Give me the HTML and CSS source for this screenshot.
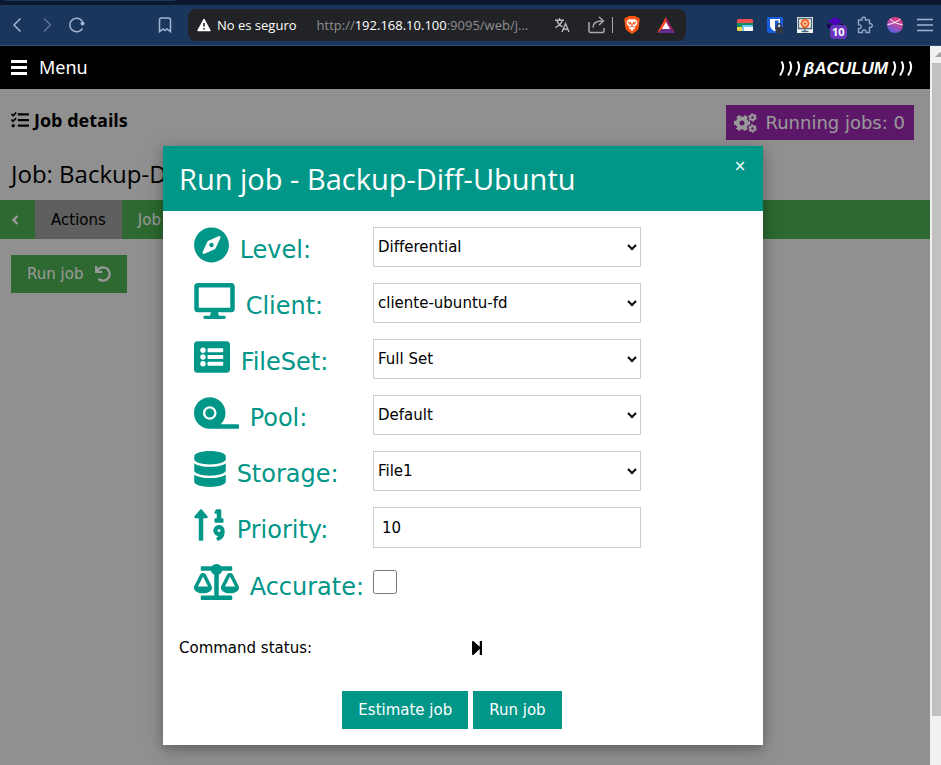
FILE: index.html
```html
<!DOCTYPE html>
<html lang="es">
<head>
<meta charset="utf-8">
<title>Job details</title>
<link rel="stylesheet" href="styles.css">
</head>
<body>
<header class="browser">
  <div class="tabstrip"><div class="tab-edge"></div></div>
  <div class="toolbar">
    <div class="tools-left">
      <button class="tool" aria-label="Atrás"><svg width="20" height="20" viewBox="0 0 20 20"><path d="M13.500 3.500 7 10l6.500 6.500" class="line"/></svg></button>
      <button class="tool dim" aria-label="Adelante"><svg width="20" height="20" viewBox="0 0 20 20"><path d="M7 3.500 13.500 10 7 16.500" class="line"/></svg></button>
      <button class="tool" aria-label="Recargar"><svg width="20" height="20" viewBox="0 0 20 20"><path d="M15.500 13.500A6.800 6.800 0 1 1 15.500 6.500" class="line"/><circle cx="15.500" cy="8.500" r="2" fill="currentColor"/></svg></button>
      <button class="tool bookmark" aria-label="Marcador"><svg width="20" height="20" viewBox="0 0 20 20"><path d="M4.500 16.800V5a2 2 0 0 1 2-2h7a2 2 0 0 1 2 2v11.800L12 14l-2 1.500L8 14z" class="line"/></svg></button>
    </div>
    <div class="address">
      <svg width="14" height="14" viewBox="0 0 14 14"><path d="M7 1.500 13 12.500H1z" fill="#fff" stroke="#fff" stroke-width="1.500" stroke-linejoin="round"/><path d="M7 5v3.500M7 10v1.500" stroke="#222326" stroke-width="1.600"/></svg>
      <span class="insecure">No es seguro</span>
      <span class="url">http://<b>192.168.10.100</b>:9095/web/j...</span>
      <svg class="translate" width="16" height="16" viewBox="0 0 16 16"><path d="M1 3.200h9M5.500 1v2M8.300 3.200C7.500 6.500 4.500 9.200 1.500 10.500M3 3.500c.8 2.800 3 5.200 5.500 6.300M8 15l3.500-8.500L15 15M9.200 12.200h4.600" fill="none" stroke="#b9babd" stroke-width="1.400"/></svg>
      <svg class="share" width="17" height="18" viewBox="0 0 17 18"><path d="M1 6v9a1.500 1.500 0 0 0 1.500 1.500h12A1.500 1.500 0 0 0 16 15v-3M5 11.500c0-4 3-6.500 9-6.500M11 1l4.500 4L11 9" fill="none" stroke="#a8a9ac" stroke-width="1.500"/></svg>
      <span class="divider"></span>
      <svg class="brave" width="16" height="18" viewBox="0 0 16 18"><path d="M4.500 0h7L13 1.500l1.500-.3L16 4l-.7 2L15 10.500c-.3 2-1 3.200-2.500 4.500L8 18l-4.500-3C2 13.700 1.300 12.500 1 10.500L.7 6 0 4l1.500-2.800 1.500.3z" fill="#fb5412"/><path d="m5 3 3 .6L11 3l2.600 2.800-1 3.200-2.100 1.700L11 12 8 15l-3-3 .5-1.300L3.400 9l-1-3.200z" fill="#fff"/><path d="m4 6 2.800.8L6 8.500zM12 6l-2.800.8.8 1.700zM8 6.500v3.800M6 11l2-1 2 1" fill="none" stroke="#fb5412"/></svg>
      <svg width="18" height="16" viewBox="0 0 18 16"><path d="M9 0v6L5.500 12 0 16z" fill="#ff4724"/><path d="m9 0 9 16-5.500-4L9 6z" fill="#9e1f63"/><path d="M0 16l5.500-4h7l5.500 4z" fill="#662d91"/><path d="m9 5 4 7H5z" fill="#fff"/></svg>
    </div>
    <div class="extensions">
      <button class="tool" aria-label="Extensión 1"><svg width="16" height="14" viewBox="0 0 16 14"><rect y="1" width="16" height="12" rx="1.500" fill="#ee4f50"/><path d="M0 5h16v4H0z" fill="#128b63"/><path d="M0 9h9v4H1.500A1.500 1.500 0 0 1 0 11.500z" fill="#f3d24b"/><rect x="5" y="7" width="11" height="6" rx="1" fill="#6ac9f4"/><path d="M7 9h9v3a1 1 0 0 1-1 1H8a1 1 0 0 1-1-1z" fill="#fff"/></svg></button>
      <button class="tool" aria-label="Extensión 2"><svg width="16" height="16" viewBox="0 0 16 16"><rect width="16" height="16" rx="1" fill="#175ddc"/><path d="M3 2h10v6c0 3-2 5-5 6.500C5 13 3 11 3 8z" fill="#fff"/><path d="M8 3.500h3.500V8c0 2-1.500 3.500-3.500 4.500z" fill="#175ddc"/><rect x="8.500" y="10" width="7.500" height="6" rx="1" fill="#343843"/><path d="M10.200 10V8.700a2 2 0 0 1 4 0V10" fill="none" stroke="#343843" stroke-width="1.400"/></svg></button>
      <button class="tool" aria-label="Extensión 3"><svg width="16" height="16" viewBox="0 0 16 16"><path d="M0 0h16v16H0z" fill="#f5f5f3"/><path d="M1.500 1.500h13v10h-13zM8 12v2.500M4.500 14.500h7" fill="none" stroke="#50687d" stroke-width="1.400"/><circle cx="8" cy="6.500" r="4.500" fill="#ee6421"/><circle cx="8" cy="6.500" r="2" fill="none" stroke="#fff"/></svg></button>
      <button class="tool" aria-label="Extensión 4"><svg width="16" height="16" viewBox="0 0 16 16"><path d="m8 0 7 4-7 5-7-5z" fill="#4d00b8"/><path d="m0 6 8 5 8-5v5l-8 4-8-5z" fill="#180052"/></svg><span class="badge">10</span></button>
      <button class="tool" aria-label="Extensiones"><svg width="18" height="18" viewBox="0 0 18 18"><path d="M2.500 4H6c-.6-1.800.4-2.800 1.700-2.800S10 2.200 9.400 4h4.100v3.800c1.800-.6 2.800.4 2.800 1.700s-1 2.300-2.800 1.700v5.300H10c.4-1.800-.7-2.600-1.800-2.600s-2.100.8-1.800 2.600H2.500v-4c1.800.4 2.700-.5 2.700-1.700S4.300 8.300 2.500 8.700z" fill="none" stroke="#92a7c9" stroke-width="1.400" stroke-linejoin="round"/></svg></button>
      <button class="tool" aria-label="Perfil"><svg width="16" height="16" viewBox="0 0 16 16"><defs><linearGradient id="ball" x1=".8" y1="0" x2=".3" y2="1"><stop stop-color="#ec3971"/><stop offset=".5" stop-color="#b54baa"/><stop offset="1" stop-color="#5260e4"/></linearGradient></defs><circle cx="8" cy="8" r="8" fill="url(#ball)"/><path d="M.5 7.500C6 7 10 4.500 13.500 2M3 2c3 2.500 6 5 12.500 5.500" fill="none" stroke="#fff"/></svg></button>
      <button class="tool" aria-label="Menú"><svg width="16" height="14" viewBox="0 0 16 14"><path d="M0 1.500h16M0 7h16M0 12.500h16" class="line"/></svg></button>
    </div>
  </div>
</header>

<div class="viewport">
  <div class="page">
    <nav class="topbar">
      <button class="menu-button"><svg width="16" height="15" viewBox="0 0 16 15"><path d="M0 1.500h16M0 7.500h16M0 13.500h16" stroke="#fff" stroke-width="3"/></svg>Menu</button>
      <div class="brand">
        <svg width="24" height="15" viewBox="0 0 24 15"><path d="M3.500.5Q7.500 6.500 2 14.500M11.500.5Q15.500 6.500 10 14.500M19.500.5Q23.500 6.500 18 14.500"/></svg>
        <span>βACULUM</span>
        <svg width="24" height="15" viewBox="0 0 24 15"><path d="M3.500.5Q7.500 6.500 2 14.500M11.500.5Q15.500 6.500 10 14.500M19.500.5Q23.500 6.500 18 14.500"/></svg>
      </div>
    </nav>

    <main class="content">
      <div class="title-row">
        <h5 class="page-title"><svg width="18" height="18" viewBox="0 0 512 512" fill="currentColor"><path d="M139.610 35.500a12 12 0 0 0-17 0L58.930 98.810l-22.700-22.120a12 12 0 0 0-17 0L3.530 92.410a12 12 0 0 0 0 17l47.590 47.400a12.780 12.780 0 0 0 17.610 0l15.590-15.620L156.520 69a12.090 12.090 0 0 0 .09-17zm0 159.190a12 12 0 0 0-17 0l-63.680 63.720-22.700-22.100a12 12 0 0 0-17 0L3.530 252a12 12 0 0 0 0 17L51 316.500a12.770 12.770 0 0 0 17.600 0l15.700-15.690 72.200-72.220a12 12 0 0 0 .09-16.900zM64 368c-26.490 0-48.590 21.500-48.590 48S37.530 464 64 464a48 48 0 0 0 0-96zm432 16H208a16 16 0 0 0-16 16v32a16 16 0 0 0 16 16h288a16 16 0 0 0 16-16v-32a16 16 0 0 0-16-16zm0-320H208a16 16 0 0 0-16 16v32a16 16 0 0 0 16 16h288a16 16 0 0 0 16-16V80a16 16 0 0 0-16-16zm0 160H208a16 16 0 0 0-16 16v32a16 16 0 0 0 16 16h288a16 16 0 0 0 16-16v-32a16 16 0 0 0-16-16z"/></svg>Job details</h5>
        <a class="running" href="#"><svg width="23" height="20" viewBox="0 0 23 20" fill="none" stroke="currentColor"><circle cx="8" cy="10" r="4.500" stroke-width="4"/><circle cx="8" cy="10" r="7" stroke-width="2.400" stroke-dasharray="4 3.330" stroke-dashoffset="2"/><circle cx="18.500" cy="4.500" r="2.300" stroke-width="2"/><circle cx="18.500" cy="4.500" r="3.500" stroke-width="1.500" stroke-dasharray="2 1.660"/><circle cx="18.500" cy="15.500" r="2.300" stroke-width="2"/><circle cx="18.500" cy="15.500" r="3.500" stroke-width="1.500" stroke-dasharray="2 1.660"/></svg>Running jobs: 0</a>
      </div>
      <h3 class="job-name">Job: Backup-D</h3>
      <div class="tabs">
        <button class="tab back" aria-label="Back"><svg width="8" height="10" viewBox="0 0 8 10"><path d="M6.500 1 2.500 5l4 4" fill="none" stroke="currentColor" stroke-width="2.400"/></svg></button>
        <button class="tab active">Actions</button>
        <button class="tab">Job</button>
      </div>
      <div class="actions">
        <button class="run">Run job <svg width="16" height="16" viewBox="0 0 512 512" fill="currentColor"><path d="M212.333 224.333H12c-6.627 0-12-5.373-12-12V12C0 5.373 5.373 0 12 0h48c6.627 0 12 5.373 12 12v78.112C117.773 39.279 184.260 7.470 258.175 8.007c136.906.994 246.448 111.623 246.157 248.532C504.041 393.258 393.120 504 256.333 504c-64.089 0-122.496-24.313-166.510-64.215-5.099-4.622-5.334-12.554-.467-17.420l33.967-33.967c4.474-4.474 11.662-4.717 16.401-.525C170.760 415.336 211.580 432 256.333 432c97.268 0 176-78.716 176-176 0-97.267-78.716-176-176-176-58.496 0-110.280 28.476-142.274 72.333h98.274c6.627 0 12 5.373 12 12v48c0 6.627-5.373 12-12 12z"/></svg></button>
      </div>
    </main>

    <div class="overlay">
      <section class="modal" role="dialog" aria-labelledby="modal-title">
        <header class="modal-head">
          <h2 id="modal-title">Run job - Backup-Diff-Ubuntu</h2>
          <button class="close" aria-label="Close">×</button>
        </header>
        <form class="modal-body">
          <div class="row">
            <label for="level"><svg width="35" height="36" viewBox="0 0 496 512"><path d="M225.380 233.370c-12.500 12.500-12.500 32.760 0 45.250 12.490 12.500 32.760 12.500 45.250 0 12.500-12.500 12.500-32.760 0-45.250-12.500-12.490-32.760-12.490-45.250 0zM248 8C111.030 8 0 119.030 0 256s111.030 248 248 248 248-111.030 248-248S384.970 8 248 8zm126.140 148.050L308.170 300.400a31.938 31.938 0 0 1-15.770 15.770l-144.340 65.970c-16.650 7.610-33.810-9.550-26.200-26.200l65.980-144.350a31.938 31.938 0 0 1 15.770-15.770l144.340-65.970c16.650-7.600 33.800 9.550 26.190 26.200z"/></svg> Level:</label>
            <select id="level"><option>Differential</option></select>
          </div>
          <div class="row">
            <label for="client"><svg width="41" height="36" viewBox="0 0 576 512"><path d="M528 0H48C21.500 0 0 21.500 0 48v320c0 26.500 21.500 48 48 48h192l-16 48h-72c-13.300 0-24 10.700-24 24s10.700 24 24 24h272c13.300 0 24-10.700 24-24s-10.700-24-24-24h-72l-16-48h192c26.500 0 48-21.500 48-48V48c0-26.500-21.500-48-48-48zm-16 352H64V64h448v288z"/></svg> Client:</label>
            <select id="client"><option>cliente-ubuntu-fd</option></select>
          </div>
          <div class="row">
            <label for="fileset"><svg width="36" height="36" viewBox="0 0 512 512"><path d="M464 480H48c-26.510 0-48-21.490-48-48V80c0-26.510 21.490-48 48-48h416c26.510 0 48 21.490 48 48v352c0 26.510-21.490 48-48 48zM128 120c-22.091 0-40 17.909-40 40s17.909 40 40 40 40-17.909 40-40-17.909-40-40-40zm0 96c-22.091 0-40 17.909-40 40s17.909 40 40 40 40-17.909 40-40-17.909-40-40-40zm0 96c-22.091 0-40 17.909-40 40s17.909 40 40 40 40-17.909 40-40-17.909-40-40-40zm288-136v-32c0-6.627-5.373-12-12-12H204c-6.627 0-12 5.373-12 12v32c0 6.627 5.373 12 12 12h200c6.627 0 12-5.373 12-12zm0 96v-32c0-6.627-5.373-12-12-12H204c-6.627 0-12 5.373-12 12v32c0 6.627 5.373 12 12 12h200c6.627 0 12-5.373 12-12zm0 96v-32c0-6.627-5.373-12-12-12H204c-6.627 0-12 5.373-12 12v32c0 6.627 5.373 12 12 12h200c6.627 0 12-5.373 12-12z"/></svg> FileSet:</label>
            <select id="fileset"><option>Full Set</option></select>
          </div>
          <div class="row">
            <label for="pool"><svg width="45" height="36" viewBox="0 0 640 512"><path d="M224 192c-35.300 0-64 28.700-64 64s28.700 64 64 64 64-28.700 64-64-28.700-64-64-64zm400 224H380.600c41.500-40.700 67.400-97.300 67.400-160 0-123.700-100.300-224-224-224S0 132.300 0 256s100.300 224 224 224h400c8.800 0 16-7.200 16-16v-32c0-8.800-7.200-16-16-16zm-400-64c-53 0-96-43-96-96s43-96 96-96 96 43 96 96-43 96-96 96z"/></svg> Pool:</label>
            <select id="pool"><option>Default</option></select>
          </div>
          <div class="row">
            <label for="storage"><svg width="32" height="36" viewBox="0 0 448 512"><path d="M448 73.143v45.714C448 159.143 347.667 192 224 192S0 159.143 0 118.857V73.143C0 32.857 100.333 0 224 0s224 32.857 224 73.143zM448 176v102.857C448 319.143 347.667 352 224 352S0 319.143 0 278.857V176c48.125 33.143 136.208 48.572 224 48.572S399.874 209.143 448 176zm0 160v102.857C448 479.143 347.667 512 224 512S0 479.143 0 438.857V336c48.125 33.143 136.208 48.572 224 48.572S399.874 369.143 448 336z"/></svg> Storage:</label>
            <select id="storage"><option>File1</option></select>
          </div>
          <div class="row">
            <label for="priority"><svg width="32" height="36" viewBox="0 0 448 512"><path d="M304 96h16v64h-16a16 16 0 0 0-16 16v32a16 16 0 0 0 16 16h96a16 16 0 0 0 16-16v-32a16 16 0 0 0-16-16h-16V48a16 16 0 0 0-16-16h-48a16 16 0 0 0-14.290 8.830l-16 32A16 16 0 0 0 304 96zm26.150 162.910a79 79 0 0 0-55 54.170c-14.250 51.050 21.210 97.770 68.850 102.530a84.070 84.070 0 0 1-20.850 12.910c-7.570 3.400-10.800 12.470-8.180 20.340l9.900 20c2.870 8.630 12.530 13.490 20.900 9.910 58-24.760 86.250-61.610 86.250-132V336c-.02-51.210-48.400-91.340-101.850-77.090zM352 356a20 20 0 1 1 20-20 20 20 0 0 1-20 20zM16 160h48v304a16 16 0 0 0 16 16h32a16 16 0 0 0 16-16V160h48c14.210 0 21.390-17.240 11.310-27.310l-80-96a16 16 0 0 0-22.620 0l-80 96C-5.350 142.740 1.780 160 16 160z"/></svg> Priority:</label>
            <input id="priority" type="text" value="10">
          </div>
          <div class="row">
            <label for="accurate"><svg width="45" height="36" viewBox="0 0 640 512"><path d="M256 336h-.02c0-16.180 1.340-8.730-85.050-181.510-17.650-35.290-68.190-35.360-85.870 0C-2.060 328.750.02 320.330.02 336H0c0 44.180 57.310 80 128 80s128-35.820 128-80zM128 176l72 144H56l72-144zm511.980 160c0-16.180 1.340-8.730-85.050-181.510-17.650-35.290-68.190-35.360-85.870 0-87.120 174.260-85.040 165.840-85.040 181.510H384c0 44.180 57.310 80 128 80s128-35.820 128-80h-.02zM440 320l72-144 72 144H440zm88 128H352V153.250c23.510-10.290 41.160-31.480 46.390-57.250H528c8.840 0 16-7.160 16-16V48c0-8.840-7.160-16-16-16H383.640C369.040 12.680 346.090 0 320 0s-49.040 12.680-63.640 32H112c-8.840 0-16 7.160-16 16v32c0 8.840 7.160 16 16 16h129.610c5.230 25.760 22.870 46.960 46.390 57.250V448H112c-8.840 0-16 7.160-16 16v32c0 8.840 7.160 16 16 16h416c8.840 0 16-7.160 16-16v-32c0-8.840-7.160-16-16-16z"/></svg> Accurate:</label>
            <input id="accurate" type="checkbox">
          </div>
          <div class="status">
            <span>Command status:</span>
            <svg width="14" height="16" viewBox="0 0 448 512"><path d="M384 44v424c0 6.600-5.400 12-12 12h-48c-6.600 0-12-5.400-12-12V291.600l-195.500 181C95.900 489.700 64 475.400 64 448V64c0-27.400 31.900-41.700 52.500-24.600L312 219.300V44c0-6.600 5.400-12 12-12h48c6.600 0 12 5.400 12 12z"/></svg>
          </div>
          <div class="buttons">
            <button type="button">Estimate job</button>
            <button type="button">Run job</button>
          </div>
        </form>
      </section>
    </div>
  </div>
  <div class="scrollbar" aria-hidden="true">
    <svg width="11" height="17" viewBox="0 0 11 17"><path d="M5 11l5-5 5 5z" fill="#a3a3a3"/></svg>
    <div class="thumb"></div>
  </div>
</div>
</body>
</html>
```
FILE: styles.css
```css
* { box-sizing: border-box; }

body {
  margin: 0;
  height: 100vh;
  display: flex;
  flex-direction: column;
  overflow: hidden;
  font: 15px/22px "DejaVu Sans", sans-serif;
  color: #000;
}

button {
  border: 0;
  margin: 0;
  padding: 0;
  background: none;
  color: inherit;
  font: inherit;
}

svg { flex: none; }

/* Browser toolbar */
.browser { flex: none; }
.tabstrip { height: 5px; background: #0b1830; }
.tab-edge { width: 170px; height: 1px; margin-left: 5px; background: #1b365d; }
.toolbar {
  display: flex;
  align-items: center;
  height: 41px;
  background: #1b365d;
  border-bottom: 1px solid #3a5171;
  color: #a2b5d3;
}
.tools-left { display: flex; width: 188px; padding: 0 8px 0 2px; }
.tool {
  display: flex;
  align-items: center;
  justify-content: center;
  position: relative;
  width: 30px;
  height: 30px;
}
.tool.dim { color: #5a7194; }
.bookmark { margin-left: auto; }
.line { fill: none; stroke: currentColor; stroke-width: 1.5; }
.address {
  flex: 1;
  min-width: 0;
  display: flex;
  align-items: center;
  height: 32px;
  padding: 0 11px 0 9px;
  border-radius: 8px;
  background: #222326;
  color: #fff;
  font: 13px/18px "Open Sans", sans-serif;
  white-space: nowrap;
}
.insecure { margin-left: 6px; }
.url { flex: 1; margin-left: 20px; color: #8d8e91; }
.url b { color: #fff; font-weight: 400; }
.translate { margin-right: 18px; }
.share { margin-right: 7px; }
.divider { width: 1px; height: 16px; background: #aaa; }
.brave { margin: 0 17px 0 11px; }
.extensions { display: flex; margin: 0 1px 0 44px; }
.badge {
  position: absolute;
  left: 10px;
  top: 15px;
  padding: 0 2px;
  border-radius: 4px;
  background: #6a36bd;
  color: #fff;
  font: bold 11px/14px "Open Sans", sans-serif;
}

/* Page */
.viewport { flex: 1; min-height: 0; display: flex; }
.page {
  flex: 1;
  min-width: 0;
  position: relative;
  background: #f1f1f1;
}
.topbar {
  position: relative;
  z-index: 2;
  display: flex;
  align-items: center;
  justify-content: space-between;
  height: 43px;
  padding: 0 16px 0 11px;
  background: #000;
  color: #fff;
}
.menu-button {
  display: flex;
  align-items: center;
  gap: 12px;
  font: 18px/27px "Noto Sans", sans-serif;
}
.brand {
  display: flex;
  align-items: center;
  gap: 2px;
  padding-top: 2px;
  font: italic bold 17px/20px "Liberation Sans", sans-serif;
}
.brand path { fill: none; stroke: #fff; stroke-width: 2; }

.title-row {
  display: flex;
  justify-content: space-between;
  align-items: flex-start;
  padding: 16px 16px 0 11px;
}
.page-title {
  display: flex;
  align-items: center;
  gap: 5px;
  margin: 0;
  font: bold 18px/30px "Open Sans", sans-serif;
}
.running {
  display: flex;
  align-items: center;
  gap: 8px;
  padding: 4px 9px 4px 8px;
  background: #9c27b0;
  color: #fff;
  font-size: 18px;
  line-height: 27px;
  text-decoration: none;
}
.job-name {
  margin: 16px 11px 8px;
  font: 24px/36px "Open Sans", sans-serif;
}
.tabs { display: flex; background: #4caf50; color: #fff; }
.tab { height: 39px; padding: 0 16px; }
.tab.back { width: 35px; padding: 0 6px 0 0; }
.tab.active { background: #9e9e9e; color: #000; }
.actions { padding: 16px 11px; }
.run {
  display: flex;
  align-items: center;
  gap: 12px;
  height: 38px;
  padding: 0 16px;
  background: #4caf50;
  color: #fff;
}

/* Modal */
.overlay {
  position: absolute;
  inset: 0;
  z-index: 1;
  padding: 100px 4px 0 0;
  background: rgba(0, 0, 0, 0.4);
}
.modal {
  max-width: 600px;
  margin: 0 auto;
  background: #fff;
  box-shadow: 0 4px 10px rgba(0, 0, 0, 0.2), 0 4px 20px rgba(0, 0, 0, 0.19);
}
.modal-head {
  display: flex;
  justify-content: space-between;
  align-items: flex-start;
  padding: 10px 16px;
  background: #009688;
  color: #fff;
}
.modal-head h2 { margin: 0; font: 29px/45px "Open Sans", sans-serif; }
.close { width: 14px; line-height: 20px; }
.modal-body { padding: 16px; }
.row {
  display: grid;
  grid-template-columns: 179px 268px;
  align-items: start;
  margin: 0 0 16px 15px;
}
.row label {
  color: #009688;
  font-size: 24px;
  line-height: 24px;
  white-space: nowrap;
}
.row label svg { margin-right: 3px; vertical-align: -5px; fill: #009688; }
.row select,
.row input[type="text"] {
  width: 100%;
  height: 40px;
  border: 1px solid #ccc;
  border-radius: 0;
  background: #fff;
  color: #000;
  font: inherit;
}
.row select { padding: 0; }
.row input[type="text"] { height: 41px; padding: 8px; }
.row input[type="checkbox"] { width: 24px; height: 24px; margin: 6px 0 0; }
.status {
  display: grid;
  grid-template-columns: 291px 1fr;
  align-items: center;
  margin-top: 37px;
}
.buttons {
  display: flex;
  justify-content: center;
  gap: 5px;
  margin-top: 32px;
  padding-right: 22px;
}
.buttons button {
  height: 38px;
  padding: 0 16px;
  background: #009688;
  color: #fff;
}

/* Window scrollbar */
.scrollbar {
  display: flex;
  flex-direction: column;
  width: 11px;
  overflow: hidden;
  padding-bottom: 49px;
  background: #f1f1f1;
}
.thumb { flex: 1; margin-left: 2px; background: #c1c1c1; }
```
